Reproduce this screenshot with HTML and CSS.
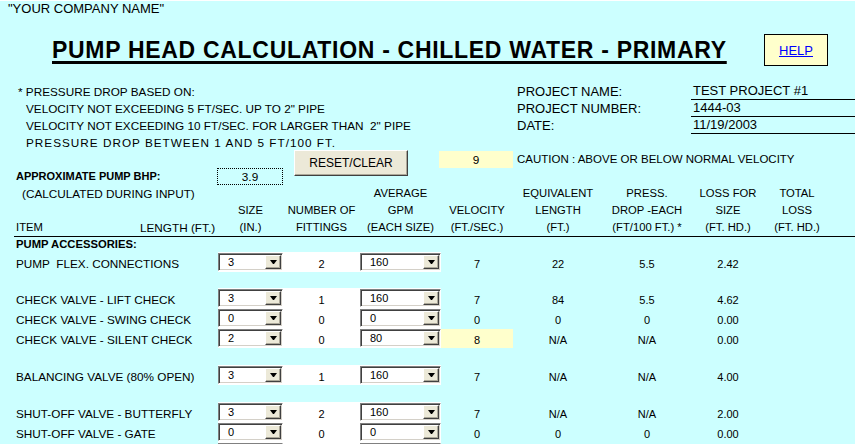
FILE: index.html
```html
<!DOCTYPE html>
<html lang="en">
  <head>
    <meta charset="UTF-8" />
    <meta name="viewport" content="width=device-width, initial-scale=1.0" />
    <title>Pump Head Calculation</title>
    <link rel="stylesheet" href="styles.css">
  </head>
  <body>
    <div class="company">"YOUR COMPANY NAME"</div>

    <div class="titlebar">
      <h1 class="title">PUMP HEAD CALCULATION - CHILLED WATER - PRIMARY</h1>
      <div class="help"><a href="#">HELP</a></div>
    </div>

    <div class="sheet">
      <!-- notes + project info -->
      <div class="info">
        <div class="note first">* PRESSURE DROP BASED ON:</div>
        <div class="plabel">PROJECT NAME:</div>
        <div class="pval">TEST PROJECT #1</div>
        <div class="note">VELOCITY NOT EXCEEDING 5 FT/SEC. UP TO 2" PIPE</div>
        <div class="plabel">PROJECT NUMBER:</div>
        <div class="pval">1444-03</div>
        <div class="note">VELOCITY NOT EXCEEDING 10 FT/SEC. FOR LARGER THAN &nbsp;2" PIPE</div>
        <div class="plabel">DATE:</div>
        <div class="pval">11/19/2003</div>
        <div class="note wide">PRESSURE DROP BETWEEN 1 AND 5 FT/100 FT.</div>
      </div>

      <div class="controls">
        <div class="bhp-label">APPROXIMATE PUMP BHP:</div>
        <div class="bhp-box">3.9</div>
        <button class="reset" id="reset">RESET/CLEAR</button>
        <div class="caution-box">9</div>
        <div class="caution-text">CAUTION : ABOVE OR BELOW NORMAL VELOCITY</div>
      </div>

      <!-- column headers -->
      <div class="thead">
        <div class="h-item"><span class="calc">(CALCULATED DURING INPUT)</span><span>&nbsp;</span><span>ITEM</span></div>
        <div class="h-length">LENGTH (FT.)</div>
        <div>SIZE<br>(IN.)</div>
        <div>NUMBER OF<br>FITTINGS</div>
        <div>AVERAGE<br>GPM<br>(EACH SIZE)</div>
        <div>VELOCITY<br>(FT./SEC.)</div>
        <div>EQUIVALENT<br>LENGTH<br>(FT.)</div>
        <div>PRESS.<br>DROP -EACH<br>(FT/100 FT.) *</div>
        <div>LOSS FOR<br>SIZE<br>(FT. HD.)</div>
        <div>TOTAL<br>LOSS<br>(FT. HD.)</div>
      </div>

      <div class="section">PUMP ACCESSORIES:</div>

      <div class="row">
        <div class="item">PUMP &nbsp;FLEX. CONNECTIONS</div><div></div>
        <div class="cell"><div class="combo"><span>3</span><i></i></div></div>
        <div class="cell num">2</div>
        <div class="cell"><div class="combo"><span>160</span><i></i></div></div>
        <div class="num">7</div><div class="num">22</div><div class="num">5.5</div><div class="num">2.42</div>
      </div>
      <div class="gap short"></div>

      <div class="row">
        <div class="item">CHECK VALVE - LIFT CHECK</div><div></div>
        <div class="cell"><div class="combo"><span>3</span><i></i></div></div>
        <div class="cell num">1</div>
        <div class="cell"><div class="combo"><span>160</span><i></i></div></div>
        <div class="num">7</div><div class="num">84</div><div class="num">5.5</div><div class="num">4.62</div>
      </div>
      <div class="row">
        <div class="item">CHECK VALVE - SWING CHECK</div><div></div>
        <div class="cell"><div class="combo"><span>0</span><i></i></div></div>
        <div class="cell num">0</div>
        <div class="cell"><div class="combo"><span>0</span><i></i></div></div>
        <div class="num">0</div><div class="num">0</div><div class="num">0</div><div class="num">0.00</div>
      </div>
      <div class="row">
        <div class="item">CHECK VALVE - SILENT CHECK</div><div></div>
        <div class="cell"><div class="combo"><span>2</span><i></i></div></div>
        <div class="cell num">0</div>
        <div class="cell"><div class="combo"><span>80</span><i></i></div></div>
        <div class="num warn">8</div><div class="num">N/A</div><div class="num">N/A</div><div class="num">0.00</div>
      </div>
      <div class="gap"></div>

      <div class="row">
        <div class="item">BALANCING VALVE (80% OPEN)</div><div></div>
        <div class="cell"><div class="combo"><span>3</span><i></i></div></div>
        <div class="cell num">1</div>
        <div class="cell"><div class="combo"><span>160</span><i></i></div></div>
        <div class="num">7</div><div class="num">N/A</div><div class="num">N/A</div><div class="num">4.00</div>
      </div>
      <div class="gap"></div>

      <div class="row">
        <div class="item">SHUT-OFF VALVE - BUTTERFLY</div><div></div>
        <div class="cell"><div class="combo"><span>3</span><i></i></div></div>
        <div class="cell num">2</div>
        <div class="cell"><div class="combo"><span>160</span><i></i></div></div>
        <div class="num">7</div><div class="num">N/A</div><div class="num">N/A</div><div class="num">2.00</div>
      </div>
      <div class="row">
        <div class="item">SHUT-OFF VALVE - GATE</div><div></div>
        <div class="cell"><div class="combo"><span>0</span><i></i></div></div>
        <div class="cell num">0</div>
        <div class="cell"><div class="combo"><span>0</span><i></i></div></div>
        <div class="num">0</div><div class="num">0</div><div class="num">0</div><div class="num">0.00</div>
      </div>
      <!-- next entry row, only its top edge shows -->
      <div class="row">
        <div class="item"></div><div></div>
        <div class="cell"><div class="combo"><span></span><i></i></div></div>
        <div class="cell num"></div>
        <div class="cell"><div class="combo"><span></span><i></i></div></div>
      </div>
    </div>
  </body>
</html>
```
FILE: styles.css
```css
html {
  background: #ccffff;
}
body {
  margin: 0;
  border-top: 1px solid #fff;
  font-family: "Liberation Sans", Arial, sans-serif;
  font-size: 11.75px;
  color: #000;
  overflow: hidden;
}
.company {
  height: 16px;
  line-height: 16px;
  padding-left: 8px;
  font-size: 13px;
}

/* title + help */
.titlebar {
  display: flex;
  align-items: center;
  height: 66px;
}
.title {
  margin: 0 0 0 52px;
  font-size: 23px;
  letter-spacing: 0.7px;
  line-height: 26px;
  font-weight: bold;
  text-decoration: underline;
  text-decoration-thickness: 3px;
  text-underline-offset: 3px;
  white-space: nowrap;
}
.help {
  margin-left: auto;
  margin-right: 27px;
  width: 64px;
  height: 32px;
  box-sizing: border-box;
  border: 1px solid #000;
  background: #ffffcc;
  display: flex;
  align-items: center;
  justify-content: center;
  font-size: 13px;
}
.help a {
  color: #0000ff;
}

/* spreadsheet columns */
.sheet {
  --cols: 126px 78px 65px 77px 81px 72px 90px 88px 74px 64px 1fr;
  padding-left: 14px;
}
.info {
  display: grid;
  grid-template-columns: var(--cols);
  grid-auto-rows: 17px;
  line-height: 17px;
}
.note {
  grid-column: 1 / 7;
  padding-left: 12px;
  white-space: nowrap;
}
.note.first {
  padding-left: 4px;
}
.note.wide {
  letter-spacing: 1px;
}
.plabel {
  grid-column: 7 / 9;
  padding-left: 4px;
  font-size: 13px;
}
.pval {
  grid-column: 9 / -1;
  padding-left: 2px;
  font-size: 13px;
  border-bottom: 1px solid #000;
  box-sizing: border-box;
  line-height: 16px;
}

.controls {
  display: grid;
  grid-template-columns: var(--cols);
  grid-template-rows: 17px 17px;
  line-height: 17px;
}
.bhp-label {
  grid-column: 1 / 3;
  grid-row: 2;
  padding-left: 2px;
  font-size: 11px;
  font-weight: bold;
}
.bhp-box {
  grid-column: 3;
  grid-row: 2;
  margin-left: -1px;
  height: 17px;
  box-sizing: border-box;
  border: 1px dotted #000;
  text-align: center;
  line-height: 15px;
}
.reset {
  grid-column: 4 / 6;
  grid-row: 1 / 3;
  margin: -1px 0 0 11px;
  width: 114px;
  height: 26px;
  padding: 0;
  font-family: inherit;
  font-size: 12px;
  color: #000;
  background: #ece9d8;
  border: 1px solid;
  border-color: #fff #404040 #404040 #fff;
  box-shadow: inset -1px -1px #aca899;
}
.caution-box {
  grid-column: 6;
  grid-row: 1;
  margin-left: -2px;
  background: #ffffcc;
  text-align: center;
}
.caution-text {
  grid-column: 7 / -1;
  grid-row: 1;
  padding-left: 4px;
  font-size: 11.5px;
  white-space: nowrap;
}

/* header */
.thead {
  display: grid;
  grid-template-columns: var(--cols);
  height: 51px;
  border-bottom: 1px solid #000;
  line-height: 17px;
  text-align: center;
  align-items: end;
  font-size: 11.25px;
  white-space: nowrap;
}
.h-item {
  text-align: left;
}
.h-item span {
  display: block;
  padding-left: 2px;
}
.h-item .calc {
  padding-left: 8px;
  font-size: 11.75px;
}
.h-length {
  text-align: right;
  padding-right: 5px;
  font-size: 11.75px;
}
.section {
  height: 15px;
  line-height: 15px;
  padding-left: 2px;
  font-size: 11.25px;
  font-weight: bold;
}

/* data rows */
.row {
  display: grid;
  grid-template-columns: var(--cols);
  height: 20px;
}
.row > div {
  padding-top: 4px;
  line-height: 16px;
}
.row .item {
  padding-left: 2px;
  white-space: nowrap;
}
.row .cell {
  background: #fff;
  padding-top: 0;
}
.row .cell.num {
  padding-top: 4px;
}
.num {
  text-align: center;
  font-size: 11px;
}
.row .warn {
  background: #ffffcc;
  margin-top: 1px;
  padding-top: 3px;
}
.gap {
  height: 17px;
}
.gap.short {
  height: 16px;
}

/* windows style combo box */
.combo {
  margin-top: 1px;
  height: 18px;
  box-sizing: border-box;
  display: flex;
  align-items: center;
  border: 1px solid;
  border-color: #808080 #fff #fff #808080;
  box-shadow: inset 1px 1px #404040, inset -1px -1px #d4d0c8;
  background: #fff;
  font-size: 11px;
}
.combo span {
  flex: 1;
  padding-left: 9px;
  line-height: 14px;
}
.combo i {
  width: 16px;
  height: 14px;
  margin-right: 1px;
  box-sizing: border-box;
  background: #ece9d8;
  border: 1px solid;
  border-color: #fff #404040 #404040 #fff;
  box-shadow: inset -1px -1px #aca899;
  display: flex;
  align-items: center;
  justify-content: center;
}
.combo i::after {
  content: "";
  width: 1px;
  border-left: 3px solid transparent;
  border-right: 3px solid transparent;
  border-top: 4px solid #000;
}
```
